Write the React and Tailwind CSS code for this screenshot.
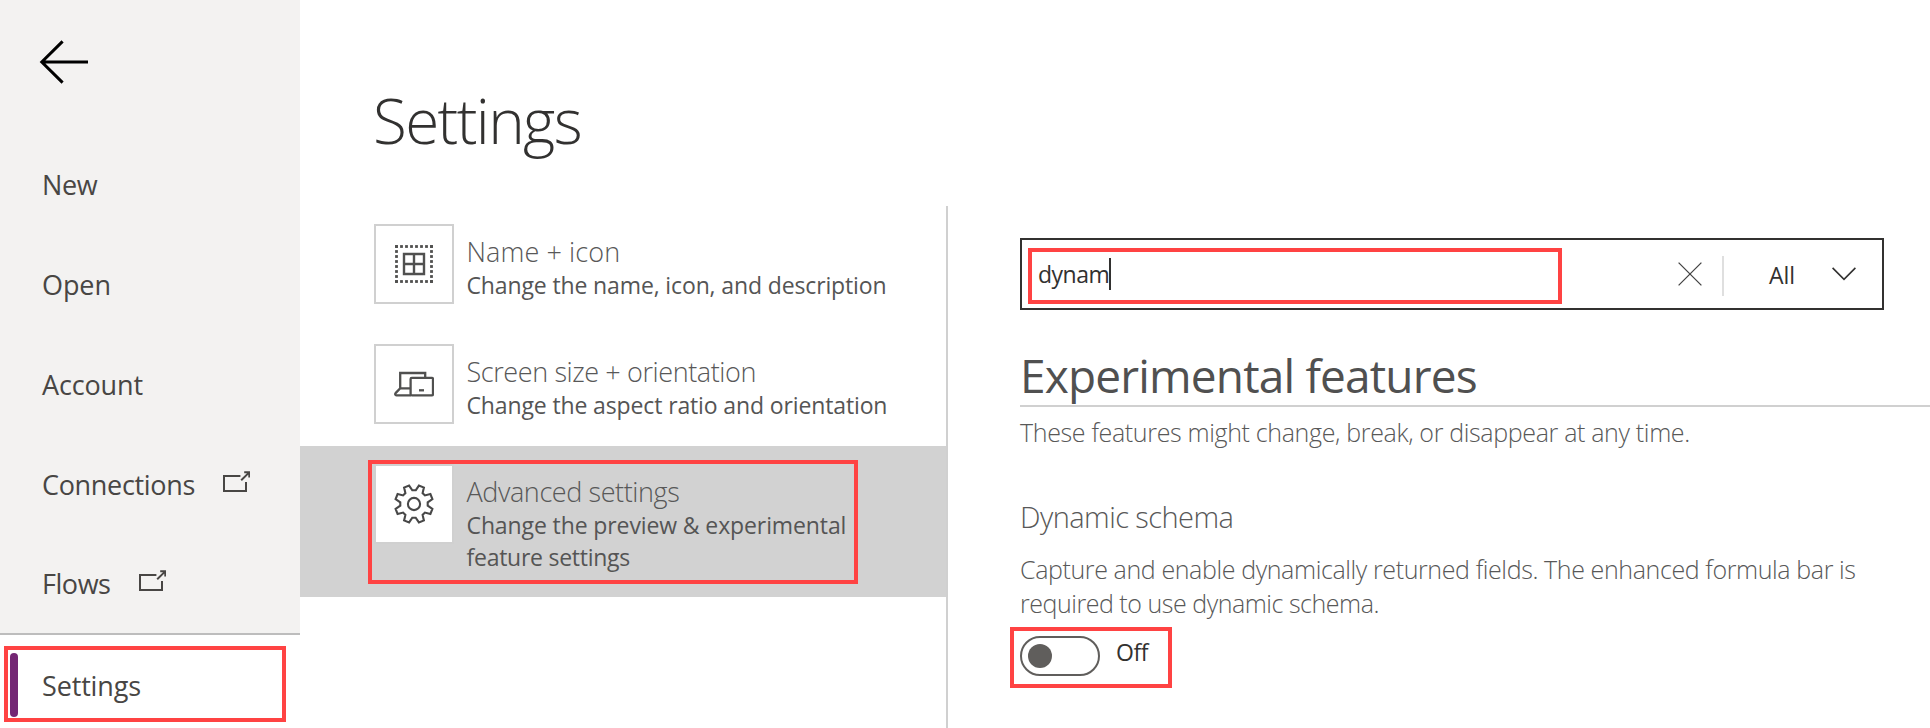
import React from "react";

function BackArrow() {
  return (
    <svg width="52" height="46" viewBox="0 0 52 46" fill="none" stroke="#000" strokeWidth="3">
      <path d="M50 23H3.5M24.6 2.4L3.8 23L24.6 43.6" />
    </svg>
  );
}

function ExternalIcon() {
  return (
    <svg width="28" height="22" viewBox="0 0 28 22" fill="none" stroke="#484644" strokeWidth="2">
      <path d="M18.4 5H2V20H24V11" />
      <path d="M19.2 9.2L27 1.6M22.2 1.3H27.3V6.4" />
    </svg>
  );
}

const DOTS = [0, 1, 2, 3, 4, 5, 6, 7];

function GridIcon() {
  return (
    <svg width="40" height="40" viewBox="0 0 40 40">
      <g fill="#50504f">
        {DOTS.map((i) => (
          <g key={i}>
            <rect x={1.1 + i * 5} y="1.1" width="2.8" height="2.8" />
            <rect x={1.1 + i * 5} y="36.1" width="2.8" height="2.8" />
            <rect x="1.1" y={1.1 + i * 5} width="2.8" height="2.8" />
            <rect x="36.1" y={1.1 + i * 5} width="2.8" height="2.8" />
          </g>
        ))}
      </g>
      <path d="M10 10H30V30H10ZM20 10V30M10 20H30" fill="none" stroke="#50504f" strokeWidth="2.4" />
    </svg>
  );
}

function DevicesIcon() {
  return (
    <svg width="40" height="40" viewBox="0 0 40 40" fill="none" stroke="#50504f" strokeWidth="2.3">
      <path d="M17 31.3H2.4C1.1 31.3 0.9 30 1.6 29.1L6.2 24.3V9H31.2V13.6M6.2 24.3H17" />
      <rect x="16.6" y="13.8" width="22.4" height="17.5" rx="1.2" />
      <path d="M25 26.3H30" />
    </svg>
  );
}

function GearIcon() {
  return (
    <svg width="42" height="42" viewBox="-21 -21 42 42" fill="none" stroke="#484848" strokeWidth="2.1">
      <path d="M1.7 -13.7L4.9 -18.4L9.9 -16.4L8.6 -10.9L10.9 -8.6L16.4 -9.9L18.4 -4.9L13.7 -1.7V1.7L18.4 4.9L16.4 9.9L10.9 8.6L8.6 10.9L9.9 16.4L4.9 18.4L1.7 13.7H-1.7L-4.9 18.4L-9.9 16.4L-8.6 10.9L-10.9 8.6L-16.4 9.9L-18.4 4.9L-13.7 1.7V-1.7L-18.4 -4.9L-16.4 -9.9L-10.9 -8.6L-8.6 -10.9L-9.9 -16.4L-4.9 -18.4L-1.7 -13.7Z" />
      <circle r="6.1" />
    </svg>
  );
}

const NAV = [
  { label: "New", tracking: "tracking-[-0.4px]" },
  { label: "Open", tracking: "tracking-[-0.1px]" },
  { label: "Account", tracking: "tracking-[-0.15px]" },
  { label: "Connections", tracking: "tracking-[-0.33px]", external: true },
  { label: "Flows", tracking: "tracking-[-0.45px]", external: true },
];

function Sidebar() {
  return (
    <nav className="flex w-[300px] shrink-0 flex-col text-[27px] text-[#484644]">
      <div className="flex h-[635px] flex-col border-b-2 border-[#bdbdbd] bg-[#f3f2f1]">
        <div className="h-[135px] shrink-0 pt-[39px] pl-[38px]">
          <BackArrow />
        </div>
        {NAV.map((item) => (
          <div key={item.label} className="flex h-[100px] items-center gap-[27px] pl-[42px] leading-[96px] last:h-[98px]">
            <span className={item.tracking}>{item.label}</span>
            {item.external && (
              <span className="-mt-[7px]">
                <ExternalIcon />
              </span>
            )}
          </div>
        ))}
      </div>
      <div className="relative flex flex-1 items-center bg-white pt-[10px] pl-[42px]">
        <span className="tracking-[-0.15px]">Settings</span>
        <div className="absolute top-[18px] left-[10px] h-[64px] w-[8px] rounded-full bg-[#742774]" />
        <div className="absolute top-[11px] left-[4px] h-[76px] w-[282px] border-4 border-[#ff4343]" />
      </div>
    </nav>
  );
}

function Item({ icon, title, titleClass, children, active }) {
  return (
    <div
      className={
        active
          ? "relative flex h-[151px] gap-[12.5px] bg-[#d2d2d2] pt-[18px] pl-[74px]"
          : "flex h-[120px] gap-[12.5px] pt-[18px] pl-[74px]"
      }
    >
      <div className="flex size-20 shrink-0 items-center justify-center border-2 border-[#d0d0d0] bg-white">
        {icon}
      </div>
      <div className="pt-[10px] whitespace-nowrap">
        <div className={`text-[27px] leading-9 font-light text-[#585858] ${titleClass}`}>{title}</div>
        <div className="text-[23px] leading-[31.5px] text-[#555555]">{children}</div>
      </div>
      {active && <div className="absolute top-[14px] left-[68px] h-[124px] w-[490px] border-4 border-[#ff4343]" />}
    </div>
  );
}

function SettingsList() {
  return (
    <div className="w-[648px] shrink-0 border-r-2 border-[#d0d0d0]">
      <Item icon={<GridIcon />} title="Name + icon" titleClass="tracking-[0.1px]">
        <div className="tracking-[-0.13px]">Change the name, icon, and description</div>
      </Item>
      <Item icon={<DevicesIcon />} title="Screen size + orientation" titleClass="tracking-[-0.4px]">
        <div className="tracking-[-0.13px]">Change the aspect ratio and orientation</div>
      </Item>
      <Item active icon={<GearIcon />} title="Advanced settings" titleClass="tracking-[-0.41px]">
        <div className="tracking-[-0.11px]">Change the preview &amp; experimental</div>
        <div className="tracking-[-0.26px]">feature settings</div>
      </Item>
    </div>
  );
}

function SearchBox() {
  return (
    <div className="flex h-[72px] w-[864px] items-center border-2 border-[#323130] text-[23px] text-[#323130]">
      <div className="mt-[4px] ml-[6px] flex h-[56px] w-[534px] items-center border-4 border-[#ff4343] pl-[6px]">
        <span className="-mt-[3px] tracking-[-0.5px]">dynam</span>
        <div className="-mt-[4px] h-8 w-[2px] bg-[#323130]" />
      </div>
      <svg className="ml-[116px]" width="24" height="24" viewBox="0 0 24 24" fill="none" stroke="#444" strokeWidth="1.3">
        <path d="M0.6 0.6L23.4 23.4M23.4 0.6L0.6 23.4" />
      </svg>
      <div className="mt-[4px] ml-[20px] h-10 w-[2px] bg-[#dfdfdf]" />
      <span className="mt-[2px] ml-[45px] w-[28px]">All</span>
      <svg className="ml-[35px]" width="24" height="14" viewBox="0 0 24 14" fill="none" stroke="#323130" strokeWidth="1.6">
        <path d="M0.6 0.9L12 12.3L23.4 0.9" />
      </svg>
    </div>
  );
}

function Details() {
  return (
    <section className="flex min-w-0 flex-1 flex-col pt-8 pl-[72px] whitespace-nowrap">
      <SearchBox />
      <h2 className="mt-[35px] h-[62px] border-b-2 border-[#d0d0d0] text-[46px] leading-[60px] tracking-[-0.83px] text-[#505050]">
        Experimental features
      </h2>
      <p className="mt-[8px] text-[25px] leading-[34px] font-light tracking-[-0.345px] text-[#585858]">
        These features might change, break, or disappear at any time.
      </p>
      <h3 className="mt-[48px] text-[29px] leading-10 font-light tracking-[-0.55px] text-[#585858]">Dynamic schema</h3>
      <div className="mt-[15px] text-[25px] leading-[34px] font-light text-[#585858]">
        <p className="tracking-[-0.39px]">
          Capture and enable dynamically returned fields. The enhanced formula bar is
        </p>
        <p className="tracking-[-0.47px]">required to use dynamic schema.</p>
      </div>
      <div className="mt-[7px] -ml-[10px] flex h-[61px] w-[162px] items-start border-4 border-[#ff4343] pt-[5px] pl-[6px]">
        <div className="flex h-10 w-20 items-center rounded-full border-2 border-[#605e5c] pl-[6px]">
          <div className="size-6 rounded-full bg-[#605e5c]" />
        </div>
        <span className="ml-4 text-[23px] leading-8 tracking-[-0.5px] text-[#323130]">Off</span>
      </div>
    </section>
  );
}

export default function App() {
  return (
    <div className="flex h-[728px] w-[1930px] overflow-hidden bg-white font-['Open_Sans','Noto_Sans',sans-serif]">
      <Sidebar />
      <main className="flex min-w-0 flex-1 flex-col">
        <h1 className="h-[206px] shrink-0 pt-[80px] pl-[73px] text-[62px] leading-[80px] font-light tracking-[-1.64px] text-[#323130]">
          Settings
        </h1>
        <div className="flex min-h-0 flex-1">
          <SettingsList />
          <Details />
        </div>
      </main>
    </div>
  );
}
